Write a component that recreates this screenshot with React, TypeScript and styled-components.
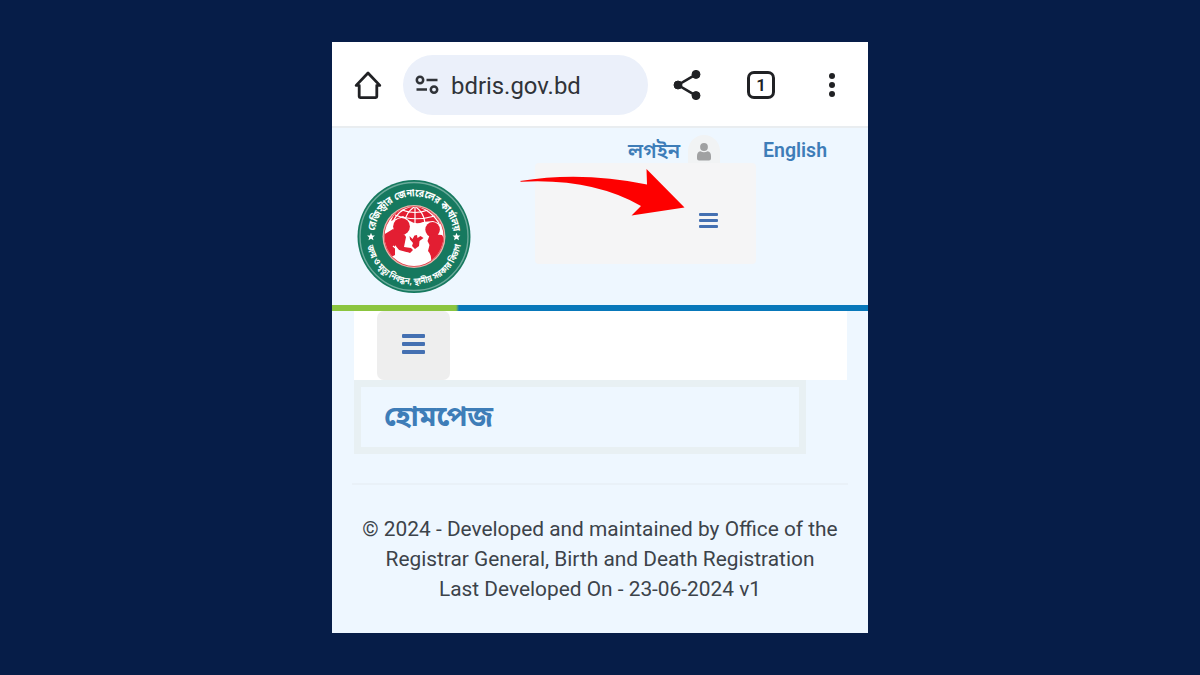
import React from "react";
import styled, { createGlobalStyle } from "styled-components";

const GlobalStyle = createGlobalStyle`
  * { box-sizing: border-box; }
  body {
    margin: 0;
    background: #061d48;
    font-family: Roboto, "Noto Sans Bengali", "Noto Sans", sans-serif;
  }
`;

const Stage = styled.main`
  width: 1200px;
  height: 675px;
  padding-top: 42px;
  display: flex;
  justify-content: center;
  align-items: flex-start;
  overflow: hidden;
`;

const Phone = styled.div`
  position: relative;
  width: 536px;
  height: 591px;
  background: #eef7ff;
  display: flex;
  flex-direction: column;
`;

const BrowserBar = styled.div`
  height: 86px;
  padding: 2px 27px 0 22px;
  background: #fff;
  border-bottom: 2px solid #e9edf0;
  display: flex;
  align-items: center;
`;

const AddressField = styled.div`
  width: 245px;
  height: 60px;
  margin: 0 24px 0 21px;
  padding-left: 12px;
  border-radius: 30px;
  background: #ebf0fa;
  display: flex;
  align-items: center;
  gap: 12px;
  color: #303338;
  font-size: 23.9px;
`;

const Url = styled.span`
  padding-top: 2px;
`;

const TabCount = styled.div`
  width: 28px;
  height: 28px;
  margin: 0 54px 0 45px;
  border: 3px solid #202124;
  border-radius: 7px;
  display: flex;
  align-items: center;
  justify-content: center;
  color: #202124;
  font-size: 17px;
  font-weight: 600;
`;

const MoreDots = styled.div`
  display: flex;
  flex-direction: column;
  gap: 3px;
`;

const Dot = styled.span`
  width: 6px;
  height: 6px;
  border-radius: 50%;
  background: #202124;
`;

const SiteHeader = styled.header`
  height: 177px;
  padding-left: 25px;
  display: flex;
`;

const SealWrap = styled.div`
  width: 114px;
  padding-top: 51px;
`;

const HeaderSide = styled.div`
  margin-left: 64px;
  flex: 1;
`;

const LinkRow = styled.nav`
  height: 35px;
  padding: 7px 0 0 93px;
  display: flex;
  align-items: flex-start;
`;

const TopLink = styled.a<{ $width: number; $size: number }>`
  width: ${(p) => p.$width}px;
  line-height: 32px;
  white-space: nowrap;
  color: #3e7db8;
  font-size: ${(p) => p.$size}px;
  font-weight: 600;
`;

const Avatar = styled.span`
  width: 32px;
  height: 28px;
  margin: 0 43px 0 8px;
  border-radius: 16px 16px 0 0;
  background: #f1f3f4;
  display: flex;
  justify-content: center;
  padding-top: 8px;
`;

const MenuPanel = styled.div`
  width: 221px;
  height: 101px;
  padding: 50px 0 0 164px;
  border-radius: 4px;
  background: #f5f5f6;
`;

const Bars = styled.span<{ $w: number; $gap: number; $h: number }>`
  width: ${(p) => p.$w}px;
  display: flex;
  flex-direction: column;
  gap: ${(p) => p.$gap}px;

  i {
    height: ${(p) => p.$h}px;
    border-radius: 1px;
    background: #4470b2;
  }
`;

const Stripe = styled.div`
  height: 6px;
  background: linear-gradient(90deg, #8bc53f 124px, #0878ba 127px);
`;

const NavBar = styled.div`
  height: 69px;
  margin: 0 21px 0 22px;
  padding-left: 23px;
  background: #fff;
`;

const ToggleButton = styled.button`
  width: 73px;
  height: 69px;
  padding: 0 0 3px;
  border: 0;
  border-radius: 7px;
  background: #eee;
  display: flex;
  align-items: center;
  justify-content: center;
`;

const HomeItem = styled.div`
  width: 452px;
  height: 74px;
  margin-left: 22px;
  padding-left: 23px;
  border: 7px solid #e8f0f3;
  color: #3e7db8;
  font-size: 28.3px;
  font-weight: 700;
  line-height: 59px;
`;

const Divider = styled.hr`
  width: 496px;
  height: 2px;
  margin: 29px 0 0 20px;
  border: 0;
  background: #e9f1f8;
`;

const Footer = styled.footer`
  padding-top: 29px;
  text-align: center;
  color: #3c434a;
  font-size: 20.87px;
  line-height: 30px;
  white-space: nowrap;
`;

const PointerArrow = styled.svg`
  position: absolute;
  left: 184px;
  top: 122px;
`;

const HomeIcon = () => (
  <svg width="28" height="30" viewBox="0 0 28 30" fill="none" stroke="#202124" strokeWidth="2.8" strokeLinejoin="round" strokeLinecap="round">
    <path d="M14 3L2.2 15.4H5.2V26.6Q5.2 27.6 6.2 27.6H21.8Q22.8 27.6 22.8 26.6V15.4H25.8Z" />
  </svg>
);

const SiteSettingsIcon = () => (
  <svg width="24" height="20" viewBox="0 0 24 20" fill="none" stroke="#303338" strokeWidth="2.5">
    <circle cx="5" cy="5" r="3.2" />
    <path d="M11.5 5H22.5M1.5 14.6H12" />
    <circle cx="19" cy="14.6" r="3.2" />
  </svg>
);

const ShareIcon = () => (
  <svg width="30" height="32" viewBox="0 0 30 32" fill="#202124" stroke="#202124">
    <path d="M24 5.4L6 16L24 26.6" fill="none" strokeWidth="2.6" />
    <circle cx="24" cy="5.4" r="4" />
    <circle cx="6" cy="16" r="4" />
    <circle cx="24" cy="26.6" r="4" />
  </svg>
);

const UserIcon = () => (
  <svg width="14" height="18" viewBox="0 0 14 18" fill="#a0a1a2">
    <circle cx="7" cy="4" r="3.9" />
    <path d="M3.4 8.2Q7 10.3 10.6 8.2Q14 8.7 14 13V15.5Q14 17.5 12 17.5H2Q0 17.5 0 15.5V13Q0 8.7 3.4 8.2Z" />
  </svg>
);

const Seal = () => (
  <svg width="114" height="116" viewBox="0 0 114 116">
    <defs>
      <path id="sealTop" d="M17.4 57A39.6 39.6 0 0 1 96.6 57" />
      <path id="sealBottom" d="M9.5 58A47.5 47.5 0 0 0 104.5 58" />
      <clipPath id="sealCore"><circle cx="57" cy="57.5" r="29.5" /></clipPath>
    </defs>
    <circle cx="57" cy="57.5" r="56.5" fill="#16795f" />
    <circle cx="57" cy="57.5" r="54" fill="none" stroke="#6cab9b" strokeWidth="1.4" />
    <circle cx="57" cy="57.5" r="31.5" fill="#eab4ac" />
    <circle cx="57" cy="57.5" r="30.2" fill="#dc3a44" />
    <g clipPath="url(#sealCore)">
      <rect x="26" y="26" width="62" height="64" fill="#fff" />
      <path d="M34 42Q40 26 57 26Q74 26 84 45L76 42L66 43Q59 46 53 42L46 37Z" fill="#e31e32" />
      <g fill="none" stroke="#fff" strokeWidth="1.2">
        <path d="M58 27V48M57 28Q49 34 48 42M59 28Q67 34 68 44M55 27Q42 30 35 44M61 27Q74 32 82 44" />
        <path d="M45 31Q58 36 71 31M38 36Q57 43 78 37" />
      </g>
      <g fill="#e31e32">
        <ellipse cx="44.5" cy="47.5" rx="8.4" ry="8.6" />
        <path d="M36 50L26 56V66L31 77Q34 79 38 76L38 66L42 71L53 74L56 71L54 69L47 68L49 58Q48 55 43 54Z" />
        <path d="M52.5 57L55.5 60L57.5 56.5L60 56L60.5 59L63.5 57L66.5 59L62.5 62L62 67L58 70L55 67L56 64L53 60.5Z" />
        <ellipse cx="75.6" cy="50.6" rx="7.3" ry="7.6" />
        <path d="M73 55L70.5 62L72.5 66L71 72Q75 76 74 83L85 78L90 65L85 56Z" />
      </g>
      <path d="M36 67L43 73L54 75L62 72L67 73M53.5 46H56.5V52H53.5" fill="none" stroke="#fff" strokeWidth="1.3" />
    </g>
    <g fill="#fff" fontFamily='"Noto Sans Bengali", "Noto Sans", sans-serif' fontWeight="700" fontSize="10.5">
      <text><textPath href="#sealTop" startOffset="5" textLength="115" lengthAdjust="spacingAndGlyphs">রেজিস্ট্রার জেনারেলের কার্যালয়</textPath></text>
      <text fontSize="9"><textPath href="#sealBottom" startOffset="9" textLength="132" lengthAdjust="spacingAndGlyphs">জন্ম ও মৃত্যু নিবন্ধন, স্থানীয় সরকার বিভাগ</textPath></text>
      <path d="M14 53.8l1.1 2.6 2.8.2-2.1 1.8.7 2.8-2.5-1.5-2.5 1.5.7-2.8-2.1-1.8 2.8-.2ZM99.5 53.8l1.1 2.6 2.8.2-2.1 1.8.7 2.8-2.5-1.5-2.5 1.5.7-2.8-2.1-1.8 2.8-.2Z" />
    </g>
  </svg>
);

const MenuBars = ({ w, gap, h }: { w: number; gap: number; h: number }) => (
  <Bars $w={w} $gap={gap} $h={h}>
    <i />
    <i />
    <i />
  </Bars>
);

export default function App() {
  return (
    <Stage>
      <GlobalStyle />
      <Phone>
        <BrowserBar>
          <HomeIcon />
          <AddressField>
            <SiteSettingsIcon />
            <Url>bdris.gov.bd</Url>
          </AddressField>
          <ShareIcon />
          <TabCount>1</TabCount>
          <MoreDots>
            <Dot />
            <Dot />
            <Dot />
          </MoreDots>
        </BrowserBar>
        <SiteHeader>
          <SealWrap>
            <Seal />
          </SealWrap>
          <HeaderSide>
            <LinkRow>
              <TopLink $width={52} $size={20.2}>লগইন</TopLink>
              <Avatar>
                <UserIcon />
              </Avatar>
              <TopLink $width={64} $size={19.5}>English</TopLink>
            </LinkRow>
            <MenuPanel>
              <MenuBars w={19} gap={3} h={3} />
            </MenuPanel>
          </HeaderSide>
        </SiteHeader>
        <Stripe />
        <NavBar>
          <ToggleButton>
            <MenuBars w={23} gap={4} h={4} />
          </ToggleButton>
        </NavBar>
        <HomeItem>হোমপেজ</HomeItem>
        <Divider />
        <Footer>
          <div>© 2024 - Developed and maintained by Office of the</div>
          <div>Registrar General, Birth and Death Registration</div>
          <div>Last Developed On - 23-06-2024 v1</div>
        </Footer>
        <PointerArrow width="170" height="56" viewBox="0 0 170 56" fill="#fe0000">
          <path d="M4 17Q66 7 131 20.5L130.5 5L168.5 43.5L115.5 51.5L125 42Q76 14 5 17.8Z" />
        </PointerArrow>
      </Phone>
    </Stage>
  );
}
